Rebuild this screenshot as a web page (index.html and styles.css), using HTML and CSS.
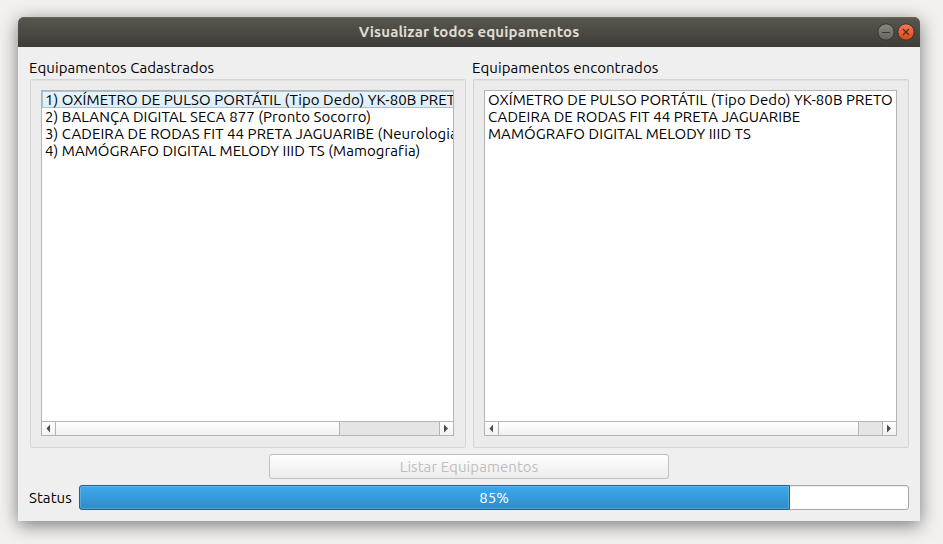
FILE: index.html
```
<!DOCTYPE html>
<html lang="pt-BR">
<head>
<meta charset="utf-8">
<title>Visualizar todos equipamentos</title>
<link rel="stylesheet" href="styles.css">
</head>
<body>
<div class="window">
  <header class="titlebar">
    <h1>Visualizar todos equipamentos</h1>
    <svg class="controls" width="38" height="20" viewBox="0 0 38 20">
      <defs>
        <linearGradient id="gray" x2="0" y2="1"><stop stop-color="#8a8880"/><stop offset="1" stop-color="#65635c"/></linearGradient>
        <linearGradient id="orange" x2="0" y2="1"><stop stop-color="#f37c58"/><stop offset="1" stop-color="#dd4814"/></linearGradient>
      </defs>
      <circle cx="9" cy="10" r="8.2" fill="url(#gray)" stroke="#34332e"/>
      <path d="M5 10.5h8" stroke="#3c3b37"/>
      <circle cx="29" cy="10" r="8.2" fill="url(#orange)" stroke="#34332e"/>
      <path d="M26 7l6 6M32 7l-6 6" stroke="#4a2c1c" stroke-width="1.2"/>
    </svg>
  </header>
  <main class="content">
    <div class="columns">
      <section class="column">
        <h2>Equipamentos Cadastrados</h2>
        <div class="group">
          <div class="list">
            <ul>
              <li class="current">1) OXÍMETRO DE PULSO PORTÁTIL (Tipo Dedo) YK-80B PRETO</li>
              <li>2) BALANÇA DIGITAL SECA 877 (Pronto Socorro)</li>
              <li>3) CADEIRA DE RODAS FIT 44 PRETA JAGUARIBE (Neurologia)</li>
              <li>4) MAMÓGRAFO DIGITAL MELODY IIID TS (Mamografia)</li>
            </ul>
            <div class="scrollbar">
              <svg class="arrow" width="13" height="13"><path d="M8 2.500v8L4.500 6.500z"/></svg>
              <div class="track"><div class="thumb thumb-left"></div></div>
              <svg class="arrow" width="13" height="13"><path d="M4 2.500v8L8 6.500z"/></svg>
            </div>
          </div>
        </div>
      </section>
      <section class="column">
        <h2>Equipamentos encontrados</h2>
        <div class="group">
          <div class="list">
            <ul>
              <li>OXÍMETRO DE PULSO PORTÁTIL (Tipo Dedo) YK-80B PRETO</li>
              <li>CADEIRA DE RODAS FIT 44 PRETA JAGUARIBE</li>
              <li>MAMÓGRAFO DIGITAL MELODY IIID TS</li>
            </ul>
            <div class="scrollbar">
              <svg class="arrow" width="13" height="13"><path d="M8 2.500v8L4.500 6.500z"/></svg>
              <div class="track"><div class="thumb thumb-right"></div></div>
              <svg class="arrow" width="13" height="13"><path d="M4 2.500v8L8 6.500z"/></svg>
            </div>
          </div>
        </div>
      </section>
    </div>
    <button class="action" disabled>Listar Equipamentos</button>
    <div class="status">
      <label>Status</label>
      <div class="progress"><div class="fill"></div><span class="value">85%</span></div>
    </div>
  </main>
</div>
</body>
</html>
```
FILE: styles.css
```
* { box-sizing: border-box; margin: 0; padding: 0; }
body {
  width: 943px; height: 544px; overflow: hidden; padding: 17px 0 0 18px;
  background: #f2f1ef; color: #000;
  font: 15px/18px Ubuntu, "Noto Sans", sans-serif;
  letter-spacing: 0.07px;
}
h1, h2, button { font: inherit; letter-spacing: inherit; }
.window {
  width: 902px; height: 504px; border-radius: 6px 6px 0 0; background: #efefef;
  box-shadow: 0 4px 18px rgba(0,0,0,.5);
}
.titlebar {
  height: 30px; display: grid; grid-template-columns: 1fr auto; align-items: center;
  padding-right: 5px; border-radius: 6px 6px 0 0;
  background: linear-gradient(#59574e, #3d3c37); box-shadow: inset 0 1px #68675c;
}
.titlebar h1 { padding-left: 43px; text-align: center; color: #dfdbd2; font-weight: 700; letter-spacing: 0.12px; }
.content { height: 474px; padding: 12px 11px 11px; display: flex; flex-direction: column; }
.columns { display: flex; gap: 7px; padding-left: 1px; }
.column { width: 436px; }
.column h2 { height: 20px; margin-left: -1px; }
.group {
  height: 369px; padding: 10px; border: 1px solid #d5d5d5; border-radius: 2px;
  background: #ebebeb; box-shadow: inset 0 1px #e3e3e3;
}
.list {
  width: 413px; height: 346px; border: 1px solid #b4b4b4; background: #fff;
  display: flex; flex-direction: column; overflow: hidden;
}
.list ul { list-style: none; flex: 1; }
.list li { height: 17px; line-height: 18px; padding-left: 3px; white-space: nowrap; }
.list li.current {
  padding-left: 2px; border: 1px solid #a9c2d3; border-right: 0; line-height: 16px;
  background: linear-gradient(#e8f4fb, #deedf6);
}
.scrollbar { height: 14px; display: flex; border-top: 1px solid #b4b4b4; background: linear-gradient(#fff, #f2f2f2); }
.arrow { fill: #4d4d4d; flex: none; }
.track { flex: 1; border: solid #b4b4b4; border-width: 0 1px; background: #e5e5e5; }
.thumb { height: 13px; border-right: 1px solid #b4b4b4; background: linear-gradient(#fff, #f0f0f0); }
.thumb-left { width: 284px; }
.thumb-right { width: 360px; }
.action {
  width: 400px; height: 25px; margin: 6px auto 6px; align-self: center;
  border: 1px solid #c0c0c0; border-radius: 3px; color: #bebebe;
  background: linear-gradient(#fff, #ececec);
}
.status { display: flex; align-items: center; height: 25px; }
.status label { width: 50px; padding-top: 1px; }
.progress {
  position: relative; flex: 1; height: 25px; border: 1px solid #a8a8a8; border-radius: 3px;
  background: #fff; box-shadow: inset 0 1px #ededed;
}
.fill {
  width: 711px; height: 25px; margin: -1px; border: 1px solid #255f8a; border-radius: 3px 1px 1px 3px;
  background: linear-gradient(#3da8ee, #308cc6); box-shadow: inset 0 0 0 1px rgba(255,255,255,.18);
}
.value { position: absolute; inset: 0; line-height: 24px; text-align: center; color: #fff; }
```
